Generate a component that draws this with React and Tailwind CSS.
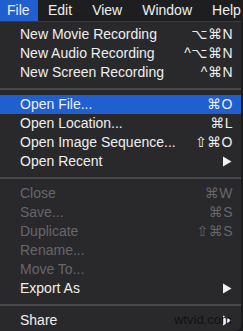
const menuBar = ["Edit", "View", "Window", "Help"]

const sections = [
  [
    { label: "New Movie Recording", key: "⌥⌘N" },
    { label: "New Audio Recording", key: "^⌥⌘N" },
    { label: "New Screen Recording", key: "^⌘N" },
  ],
  [
    { label: "Open File...", key: "⌘O", active: true },
    { label: "Open Location...", key: "⌘L" },
    { label: "Open Image Sequence...", key: "⇧⌘O" },
    { label: "Open Recent", submenu: true },
  ],
  [
    { label: "Close", key: "⌘W", disabled: true },
    { label: "Save...", key: "⌘S", disabled: true },
    { label: "Duplicate", key: "⇧⌘S", disabled: true },
    { label: "Rename...", disabled: true },
    { label: "Move To...", disabled: true },
    { label: "Export As", submenu: true },
  ],
  [{ label: "Share", submenu: true }],
]

function Arrow() {
  return (
    <svg width="10" height="11" viewBox="0 0 10 11" className="mr-[1px]">
      <path d="M1 0.5 L9.5 5.5 L1 10.5 Z" fill="#f2f2f2" />
    </svg>
  )
}

function Row({ item }) {
  const text = item.disabled ? "text-[#66666a]" : "text-[#efefef]"
  return (
    <div
      className={`flex items-center justify-between h-[19px] pl-[20px] pr-[8px] ${
        item.active ? "bg-[#1f5fcf]" : ""
      } ${text}`}
    >
      <span>{item.label}</span>
      {item.submenu ? (
        <Arrow />
      ) : (
        <span className="tracking-[0.5px]">{item.key}</span>
      )}
    </div>
  )
}

export default function App() {
  return (
    <div
      className="w-[243px] h-[331px] bg-[#1b1b1d] overflow-hidden relative text-[14px] leading-[19px]"
      style={{ fontFamily: '"Liberation Sans", "DejaVu Sans", sans-serif' }}
    >
      <div className="flex items-center h-[21px] bg-[#1e1e20] text-[#efefef]">
        <div className="bg-[#1f5fcf] h-full w-[38px] pl-[7px] flex items-center">File</div>
        <div className="flex gap-[20px] pl-[10px] whitespace-nowrap">
          {menuBar.map((m) => (
            <span key={m}>{m}</span>
          ))}
        </div>
      </div>
      <div className="w-[241px] h-[310px] bg-[#29292c] border-t border-[#3a3a3d] rounded-br-[6px] pt-[3px]">
        {sections.map((sec, i) => (
          <div key={i}>
            {i > 0 && (
              <div className="h-[13px] flex items-center">
                <div className="h-[2px] w-full bg-[#48484b]" />
              </div>
            )}
            {sec.map((item) => (
              <Row key={item.label} item={item} />
            ))}
          </div>
        ))}
      </div>
      <span className="absolute left-[174px] top-[310px] text-[13px] text-[#121214]">wtvid.com</span>
    </div>
  )
}
